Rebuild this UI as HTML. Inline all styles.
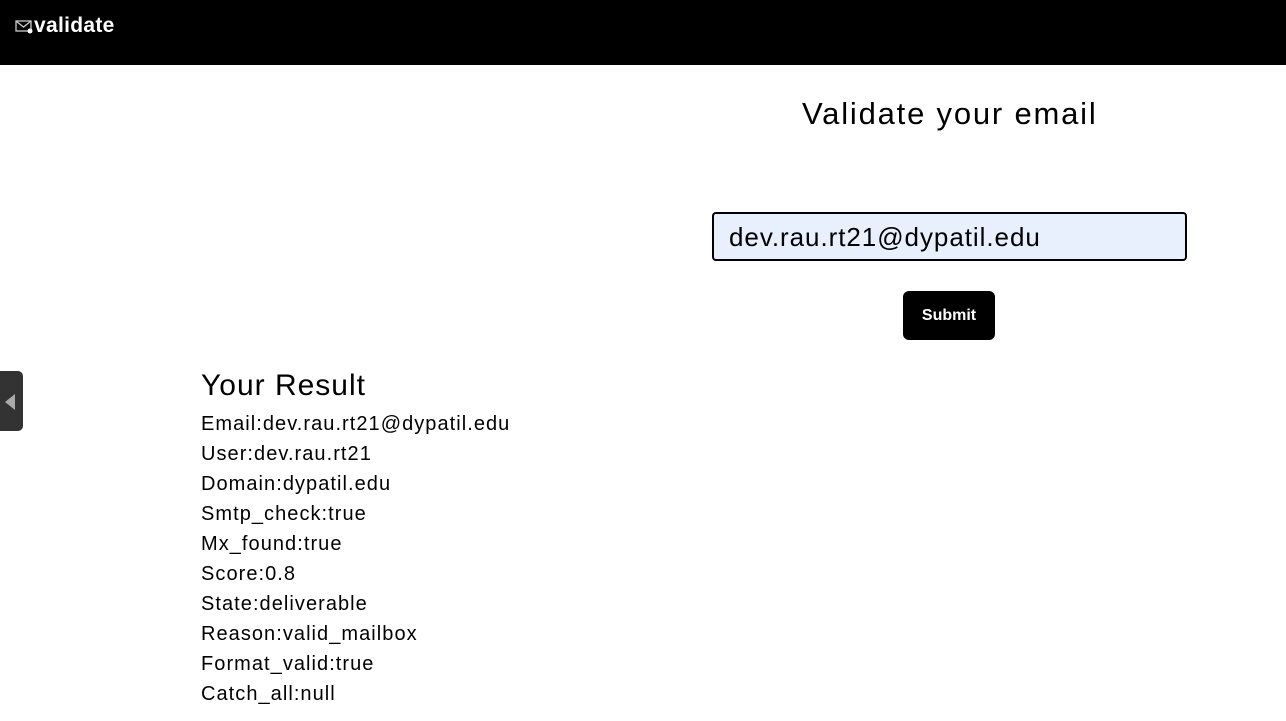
<!DOCTYPE html>
<html><head><style>
body{margin:0;width:1286px;height:721px;overflow:hidden;background:#fff;font-family:"Liberation Sans",sans-serif;position:relative}
.nav{position:absolute;left:0;top:0;width:1286px;height:65px;background:#000}
.logo{position:absolute;left:15px;top:14px;color:#fff;font-size:21px;font-weight:bold;display:flex;align-items:center}
.a{position:absolute;white-space:nowrap}
h1{position:absolute;margin:0;left:802px;top:96px;font-size:31px;font-weight:normal;letter-spacing:1.8px}
.inp{position:absolute;left:712px;top:212px;width:471px;height:45px;background:#e8f0fe;border:2px solid #000;border-radius:4px;box-sizing:content-box}
.inp span{position:absolute;left:15px;top:8px;font-size:26px;letter-spacing:0.95px}
.btn{position:absolute;left:903px;top:291px;width:92px;height:49px;background:#000;border-radius:6px;color:#fff;font-weight:bold;font-size:16px;text-align:center;line-height:50px}
.tab{position:absolute;left:0;top:371px;width:23px;height:60px;background:#333;border-radius:0 5px 5px 0}
.res{position:absolute;left:201px;top:409px;font-size:20px;line-height:30px;letter-spacing:1.05px}
</style></head><body>
<div class="nav"><div class="logo"><svg width="18" height="15" viewBox="0 0 18 15"><rect x="1" y="2" width="15" height="10" fill="none" stroke="#ccc" stroke-width="1.3"/><path d="M1 2 L8.5 8 L16 2" fill="none" stroke="#ccc" stroke-width="1.3"/><circle cx="15" cy="12" r="2.5" fill="#fff"/></svg><span style="margin-left:1px;letter-spacing:0.3px">validate</span></div></div>
<h1>Validate your email</h1>
<div class="inp"><span>dev.rau.rt21@dypatil.edu</span></div>
<div class="btn">Submit</div>
<div class="tab"><svg width="23" height="60"><path d="M5 31 L15 23 L15 39 Z" fill="#aaa"/></svg></div>
<div class="a" style="left:201px;top:369px;font-size:30px;letter-spacing:1px">Your Result</div>
<div class="res">Email:dev.rau.rt21@dypatil.edu<br>User:dev.rau.rt21<br>Domain:dypatil.edu<br>Smtp_check:true<br>Mx_found:true<br>Score:0.8<br>State:deliverable<br>Reason:valid_mailbox<br>Format_valid:true<br>Catch_all:null</div>
</body></html>
